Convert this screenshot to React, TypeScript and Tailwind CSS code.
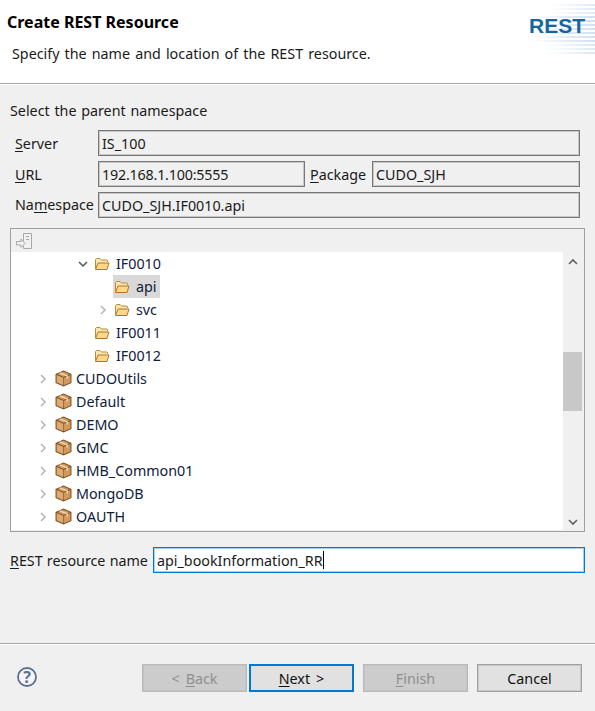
const font = { fontFamily: '"Noto Sans", "Open Sans", sans-serif' };

function Mnemonic({ text, at }: { text: string; at: number }) {
  return (
    <>
      {text.slice(0, at)}
      <span className="underline underline-offset-2">{text[at]}</span>
      {text.slice(at + 1)}
    </>
  );
}

function Folder() {
  return (
    <svg width="16" height="14" viewBox="0 0 16 14" className="shrink-0">
      <path d="M1.5 11.5V2.5L2.5 1.5H6L7.5 3H13L13.5 3.5V5" fill="#fbe6ae" stroke="#b98a3c" />
      <path d="M1.5 12.5L4 6H15L13 12.5Z" fill="#fcd98a" stroke="#b4752a" />
    </svg>
  );
}

function Box() {
  return (
    <svg width="17" height="17" viewBox="0 0 16 16" className="shrink-0">
      <path d="M8 1L15 4V12L8 15L1 12V4Z" fill="#d39a5c" stroke="#7f5226" />
      <path d="M1 4L8 7L15 4M8 7V15" fill="none" stroke="#7f5226" />
      <path d="M4.5 2.6L11.5 5.6V8" fill="none" stroke="#f1d9b4" strokeWidth="1.3" />
      <path d="M2 5L8 7.6V14L2 11.4Z" fill="#e2b684" opacity="0.6" />
    </svg>
  );
}

function Chevron({ open }: { open?: boolean }) {
  return (
    <svg width="10" height="10" viewBox="0 0 10 10" className="shrink-0">
      {open ? (
        <path d="M1 3L5 7L9 3" fill="none" stroke="#555555" strokeWidth="1.5" />
      ) : (
        <path d="M3 1L7 5L3 9" fill="none" stroke="#b5b5b5" strokeWidth="1.5" />
      )}
    </svg>
  );
}

type Row = { label: string; indent: string; kind: "folder" | "box"; arrow?: "open" | "closed"; selected?: boolean };

const rows: Row[] = [
  { label: "IF0010", indent: "pl-[67px]", kind: "folder", arrow: "open" },
  { label: "api", indent: "pl-[87px]", kind: "folder", selected: true },
  { label: "svc", indent: "pl-[87px]", kind: "folder", arrow: "closed" },
  { label: "IF0011", indent: "pl-[67px]", kind: "folder" },
  { label: "IF0012", indent: "pl-[67px]", kind: "folder" },
  { label: "CUDOUtils", indent: "pl-[27px]", kind: "box", arrow: "closed" },
  { label: "Default", indent: "pl-[27px]", kind: "box", arrow: "closed" },
  { label: "DEMO", indent: "pl-[27px]", kind: "box", arrow: "closed" },
  { label: "GMC", indent: "pl-[27px]", kind: "box", arrow: "closed" },
  { label: "HMB_Common01", indent: "pl-[27px]", kind: "box", arrow: "closed" },
  { label: "MongoDB", indent: "pl-[27px]", kind: "box", arrow: "closed" },
  { label: "OAUTH", indent: "pl-[27px]", kind: "box", arrow: "closed" },
];

function TreeRow({ row }: { row: Row }) {
  return (
    <div className={`flex items-center h-[23px] ${row.indent}`}>
      <div className="w-[10px] mr-[5px] flex items-center">
        {row.arrow && <Chevron open={row.arrow === "open"} />}
      </div>
      <div className={`flex items-center h-[23px] ${row.kind === "box" ? "pl-[2px]" : "pl-px"} ${row.selected ? "bg-[#d9d9d9] pr-[3px]" : ""}`}>
        {row.kind === "folder" ? <Folder /> : <Box />}
        <span className={`${row.kind === "box" ? "ml-[4px]" : "ml-[6px]"} pt-[2px] text-[14.3px] text-[#0f2038] leading-none`}>{row.label}</span>
      </div>
    </div>
  );
}

function Field({ value, className }: { value: string; className: string }) {
  return (
    <div className={`h-[26px] border border-[#777777] shadow-[inset_0_0_0_1px_#c8c8c8] bg-[#f0f0f0] pl-[3px] text-[14.3px] leading-[25px] text-[#1a1a1a] ${className}`}>
      {value}
    </div>
  );
}

function Button({ children, variant }: { children: React.ReactNode; variant: "disabled" | "default" | "focus" }) {
  const styles = {
    disabled: "bg-[#cccccc] border border-[#b8b8b8] shadow-[inset_0_0_0_1px_#c4c4c4] text-[#8f8f8f]",
    default: "bg-[#e1e1e1] border border-[#a0a0a0] shadow-[inset_0_0_0_1px_#c8c8c8] text-[#111111]",
    focus: "bg-[#e1e1e1] border-2 border-[#0078d7] text-[#111111]",
  }[variant];
  return <div className={`w-[105px] h-[28px] pt-[2px] flex items-center justify-center text-[14.3px] ${styles}`}>{children}</div>;
}

export default function App() {
  return (
    <div className="w-[595px] h-[711px] bg-[#f0f0f0] flex flex-col overflow-hidden" style={font}>
      <header className="relative h-[83px] bg-white shrink-0 pl-[7px] pt-[10px]">
        <div className="text-[16px] font-bold leading-[24px] text-black">Create REST Resource</div>
        <div className="pl-[5px] mt-[8px] text-[14.3px] [word-spacing:1.4px] leading-[24px] text-[#1a1a1a]">Specify the name and location of the REST resource.</div>
        <div className="absolute right-0 top-0 w-[80px] h-[60px]">
          <svg width="80" height="60" viewBox="0 0 80 60" className="absolute inset-0">
            <defs>
              <linearGradient id="fade" x1="0" x2="1" y1="0" y2="0">
                <stop offset="0" stopColor="#e6eef7" stopOpacity="0" />
                <stop offset="0.6" stopColor="#dce7f3" stopOpacity="0.8" />
                <stop offset="1" stopColor="#d0dfef" />
              </linearGradient>
            </defs>
            {[4, 8, 12, 16, 20, 24, 28, 32, 36, 40, 44, 48, 52].map((y, i) => (
              <rect key={y} x={i < 3 ? 32 : i > 9 ? 28 : 10} y={y} width="72" height="2" fill="url(#fade)" />
            ))}
          </svg>
          <div className="absolute left-[14px] top-[12px] text-[21px] font-bold leading-[28px] text-[#17659f]" style={{ fontFamily: '"Liberation Sans", sans-serif' }}>
            REST
          </div>
        </div>
      </header>
      <div className="h-[2px] bg-[#a8a8a8] border-b border-white shrink-0" />

      <main className="flex-1 flex flex-col pl-[10px] pr-[10px]">
        <div className="mt-[16px] h-[20px] text-[14.3px] [word-spacing:1px] leading-[20px] text-[#1a1a1a]">Select the parent namespace</div>

        <div className="mt-[9px] flex flex-col gap-[5px] text-[14.3px] text-[#1a1a1a]">
          <div className="flex items-center">
            <div className="w-[88px] pl-[5px] pt-[2px]"><Mnemonic text="Server" at={0} /></div>
            <Field value="IS_100" className="w-[482px]" />
          </div>
          <div className="flex items-center">
            <div className="w-[88px] pl-[5px] pt-[2px]"><Mnemonic text="URL" at={0} /></div>
            <Field value="192.168.1.100:5555" className="w-[207px] tracking-[-0.2px]" />
            <div className="w-[67px] pl-[5px] pt-[2px]"><Mnemonic text="Package" at={0} /></div>
            <Field value="CUDO_SJH" className="w-[208px]" />
          </div>
          <div className="flex items-center">
            <div className="w-[88px] pl-[5px]"><Mnemonic text="Namespace" at={2} /></div>
            <Field value="CUDO_SJH.IF0010.api" className="w-[482px]" />
          </div>
        </div>

        <section className="mt-[10px] h-[304px] w-[575px] border border-[#a0a0a0] flex flex-col">
          <div className="h-[23px] shrink-0 pl-[4px] flex items-center">
            <svg width="18" height="18" viewBox="0 0 18 18" fill="none" stroke="#a8a8a8">
              <path d="M8.5 9V1.5H16.5V16.5H8.5V14" />
              <path d="M1.5 9.5H6V7L10 11.5L6 15.5V13H1.5Z" />
              <path d="M11 4.5H14M11 7.5H14" />
            </svg>
          </div>
          <div className="flex flex-1 min-h-0 pb-[1px]">
            <div className="w-[552px] bg-white overflow-hidden">
              {rows.map((row) => <TreeRow key={row.label} row={row} />)}
            </div>
            <div className="w-[19px] flex flex-col items-center pt-[6px] pb-[4px]">
              <svg width="10" height="8" viewBox="0 0 10 8"><path d="M1 6L5 2L9 6" fill="none" stroke="#606060" strokeWidth="1.6" /></svg>
              <div className="relative w-full flex-1">
                <div className="absolute left-0 right-0 top-[86px] h-[59px] bg-[#c8c8c8]" />
              </div>
              <svg width="10" height="8" viewBox="0 0 10 8"><path d="M1 2L5 6L9 2" fill="none" stroke="#606060" strokeWidth="1.6" /></svg>
            </div>
          </div>
        </section>

        <div className="mt-[15px] flex items-center text-[14.3px] text-[#1a1a1a]">
          <div className="w-[143px] pt-[2px] [word-spacing:0.5px]"><Mnemonic text="REST resource name" at={0} /></div>
          <div className="w-[432px] h-[26px] border border-[#0078d7] shadow-[inset_0_0_0_1px_#a8cfee] bg-white pl-[3px] flex items-center">
            <span className="pt-[2px]">api_bookInformation_RR</span>
            <span className="w-px h-[18px] bg-black" />
          </div>
        </div>
      </main>

      <div className="h-[2px] bg-[#a8a8a8] border-b border-white shrink-0" />
      <footer className="h-[66px] shrink-0 flex items-start pt-[19px] pl-[17px] pr-[13px]">
        <svg width="20" height="20" viewBox="0 0 20 20" className="mt-[3px]">
          <circle cx="10" cy="10" r="9" fill="#f4f6fa" stroke="#5f6f8e" strokeWidth="1.8" />
          <text x="10" y="15.5" textAnchor="middle" fontSize="16" fontWeight="700" fill="#5f6f8e" style={font}>?</text>
        </svg>
        <div className="ml-auto flex">
          <Button variant="disabled"><span className="mr-[6px]">&lt;</span><Mnemonic text="Back" at={0} /></Button>
          <div className="w-[2px]" />
          <Button variant="focus"><Mnemonic text="Next" at={0} /><span className="ml-[6px]">&gt;</span></Button>
          <div className="w-[9px]" />
          <Button variant="disabled"><Mnemonic text="Finish" at={0} /></Button>
          <div className="w-[9px]" />
          <Button variant="default">Cancel</Button>
        </div>
      </footer>
    </div>
  );
}
